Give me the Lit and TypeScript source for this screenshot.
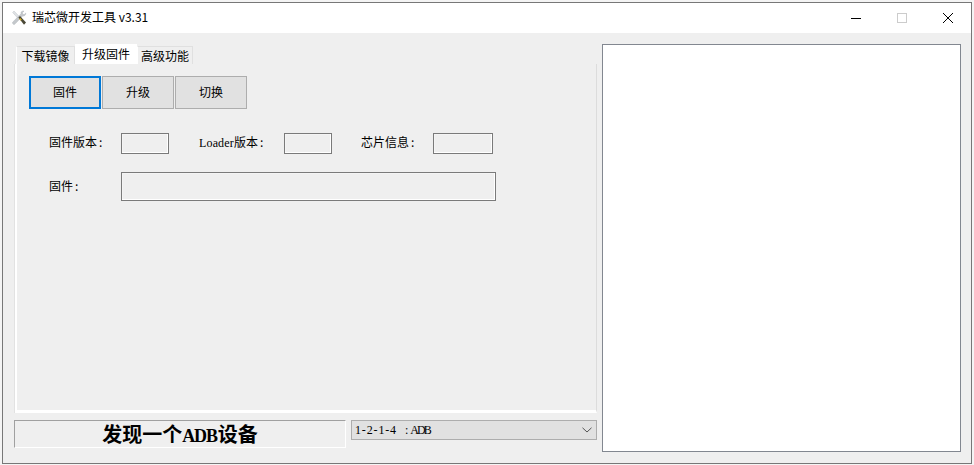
import { LitElement, html, css } from "lit";
import { customElement } from "lit/decorators.js";

@customElement("app-root")
export class AppRoot extends LitElement {
  static styles = css`
    :host {
      display: block;
      width: 974px;
      height: 465px;
      background: #f4f4f4;
      padding: 2px 2px 1px;
      box-sizing: border-box;
      font-family: "Noto Sans CJK SC", "Liberation Sans", sans-serif;
      font-size: 12px;
      color: #000;
      overflow: hidden;
    }
    .window {
      height: 100%;
      box-sizing: border-box;
      border: 1px solid #777;
      background: #efefef;
      display: flex;
      flex-direction: column;
    }
    .titlebar {
      height: 30px;
      flex: none;
      background: #fff;
      display: flex;
      align-items: center;
      padding-left: 8px;
    }
    .app-icon { width: 16px; height: 16px; flex: none; }
    .title { margin-left: 5px; font-size: 12px; line-height: 16px; padding-bottom: 2px; font-family: "Noto Sans CJK SC", "Open Sans", sans-serif; }
    .controls { margin-left: auto; display: flex; }
    .ctl { width: 46px; height: 30px; display: flex; align-items: center; justify-content: center; }
    .ctl svg { width: 12px; height: 12px; display: block; }
    .body {
      flex: 1;
      display: grid;
      grid-template-columns: 583px 359px;
      column-gap: 5px;
      padding: 11px 10px 11px 11px;
      min-height: 0;
    }
    .left { display: flex; flex-direction: column; min-width: 0; }
    .tabs { display: flex; align-items: flex-end; height: 20px; margin-left: 2px; flex: none; }
    .tab {
      height: 18px;
      box-sizing: border-box;
      line-height: 17px;
      font-size: 12px;
      border: 1px solid #e0e0e0;
      border-bottom: none;
      border-left-color: #fff;
      white-space: nowrap;
      text-align: center;
    }
    .tab.w1 { width: 59px; }
    .tab.w2 { width: 62px; height: 20px; background: #fff; border-color: #fff; line-height: 18px; }
    .tab.w3 { width: 56px; }
    .panel {
      height: 349px;
      flex: none;
      box-sizing: border-box;
      border-left: 2px solid #fff;
      border-bottom: 3px solid #fff;
      border-right: 1px solid #dcdcdc;
      box-shadow: -1px 0 0 #e2e2e2;
      padding: 12px 0 0 12px;
      margin-left: 1px;
    }
    .buttons { display: flex; }
    .btn {
      width: 72px;
      height: 33px;
      box-sizing: border-box;
      background: #e1e1e1;
      border: 1px solid #adadad;
      display: flex;
      align-items: center;
      justify-content: center;
      font-size: 12px;
      padding-bottom: 3px;
      margin-right: 1px;
    }
    .btn.focus { border: 2px solid #0078d7; }
    .row { display: flex; align-items: center; padding-left: 20px; }
    .row.one { margin-top: 24px; height: 21px; }
    .row.two { margin-top: 18px; height: 29px; }
    .lbl { font-size: 12px; white-space: nowrap; flex: none; line-height: 16px; padding-bottom: 3px; }
    .row.two .lbl { padding-bottom: 1px; }
    .lbl.w72 { width: 72px; }
    .lbl.w85 { width: 85px; margin-left: 30px; }
    .lbl.w72b { width: 72px; margin-left: 29px; }
    .colon { margin-left: 2px; }
    .serif { font-family: "Liberation Serif", serif; font-size: 12px; letter-spacing: 0.15px; }
    .field {
      flex: none;
      height: 100%;
      box-sizing: border-box;
      border: 1px solid #7a7a7a;
      box-shadow: inset -1px -1px 0 #fff, inset 1px 1px 0 #f4f4f4;
    }
    .f48 { width: 48px; }
    .f60 { width: 60px; }
    .f375 { width: 375px; }
    .footer { display: flex; margin-top: 7px; flex: none; align-items: flex-start; }
    .status {
      width: 332px;
      height: 28px;
      box-sizing: border-box;
      border: 1px solid #fff;
      border-top-color: #a0a0a0;
      border-left-color: #a0a0a0;
      text-align: center;
      font-family: "Noto Sans CJK SC", sans-serif;
      font-weight: 700;
      font-size: 20px;
      line-height: 25px;
      flex: none;
    }
    .status .latin { font-family: "Liberation Serif", serif; font-size: 18px; letter-spacing: -1.2px; margin-right: 1px; }
    .select {
      margin-left: 5px;
      width: 246px;
      height: 20px;
      box-sizing: border-box;
      background: #e1e1e1;
      border: 1px solid #adadad;
      display: flex;
      align-items: center;
      padding: 0 4px 0 3px;
      font-family: "Liberation Serif", serif;
      font-size: 12px;
      white-space: pre;
      flex: none;
    }
    .select .num { letter-spacing: 0.85px; }
    .select .sep { margin: 0 2px 0 8px; }
    .select .dev { letter-spacing: -2px; }
    .select svg { margin-left: auto; width: 10px; height: 6px; display: block; }
    .log {
      background: #fff;
      border: 1px solid #828790;
      box-sizing: border-box;
      min-height: 0;
    }
  `;

  render() {
    return html`
      <div class="window">
        <div class="titlebar">
          <svg class="app-icon" viewBox="0 0 16 16" aria-hidden="true">
            <path d="M1.600 2.400 L3 1 L8.600 6.800 L7 8.400 Z" fill="#dfe2e5" stroke="#c2c6ca" stroke-width=".5"/>
            <path d="M12.200 1 C10.600 1 9.600 2.400 10 3.800 L3 10.800 L1.200 13 L3 14.800 L5.200 12.800 L11.600 6 C13.200 6.400 15 5 14.800 3 L13.200 4.600 L11.600 4.200 L11.400 2.600 L13 1.200 Z" fill="#c4c8cc" stroke="#a8adb2" stroke-width=".4"/>
            <path d="M7.400 7.400 L9 6 L15 12.600 L13 14.800 Z" fill="#4a4836"/>
            <path d="M9.200 8 L10.800 9.600 L9.800 10.800 L8.200 9.200 Z" fill="#d9b021"/>
          </svg>
          <span class="title">瑞芯微开发工具 v3.31</span>
          <div class="controls">
            <div class="ctl"><svg viewBox="0 0 12 12"><path d="M1 6.500H11" stroke="#000" stroke-width="1"/></svg></div>
            <div class="ctl"><svg viewBox="0 0 12 12"><rect x="1.500" y="1.500" width="9" height="9" fill="none" stroke="#ccc" stroke-width="1"/></svg></div>
            <div class="ctl"><svg viewBox="0 0 12 12"><path d="M1 1L11 11M11 1L1 11" stroke="#000" stroke-width="1"/></svg></div>
          </div>
        </div>
        <div class="body">
          <div class="left">
            <div class="tabs">
              <div class="tab w1">下载镜像</div>
              <div class="tab w2">升级固件</div>
              <div class="tab w3">高级功能</div>
            </div>
            <div class="panel">
              <div class="buttons">
                <div class="btn focus">固件</div>
                <div class="btn">升级</div>
                <div class="btn">切换</div>
              </div>
              <div class="row one">
                <span class="lbl w72">固件版本<span class="colon">:</span></span>
                <div class="field f48"></div>
                <span class="lbl w85"><span class="serif">Loader</span>版本<span class="colon">:</span></span>
                <div class="field f48"></div>
                <span class="lbl w72b">芯片信息<span class="colon">:</span></span>
                <div class="field f60"></div>
              </div>
              <div class="row two">
                <span class="lbl w72">固件<span class="colon">:</span></span>
                <div class="field f375"></div>
              </div>
            </div>
            <div class="footer">
              <div class="status">发现一个<span class="latin">ADB</span>设备</div>
              <div class="select">
                <span class="num">1-2-1-4</span><span class="sep">:</span><span class="dev">ADB</span>
                <svg viewBox="0 0 10 6"><path d="M.5.8L5 5L9.500.8" fill="none" stroke="#555" stroke-width="1"/></svg>
              </div>
            </div>
          </div>
          <div class="log"></div>
        </div>
      </div>
    `;
  }
}
